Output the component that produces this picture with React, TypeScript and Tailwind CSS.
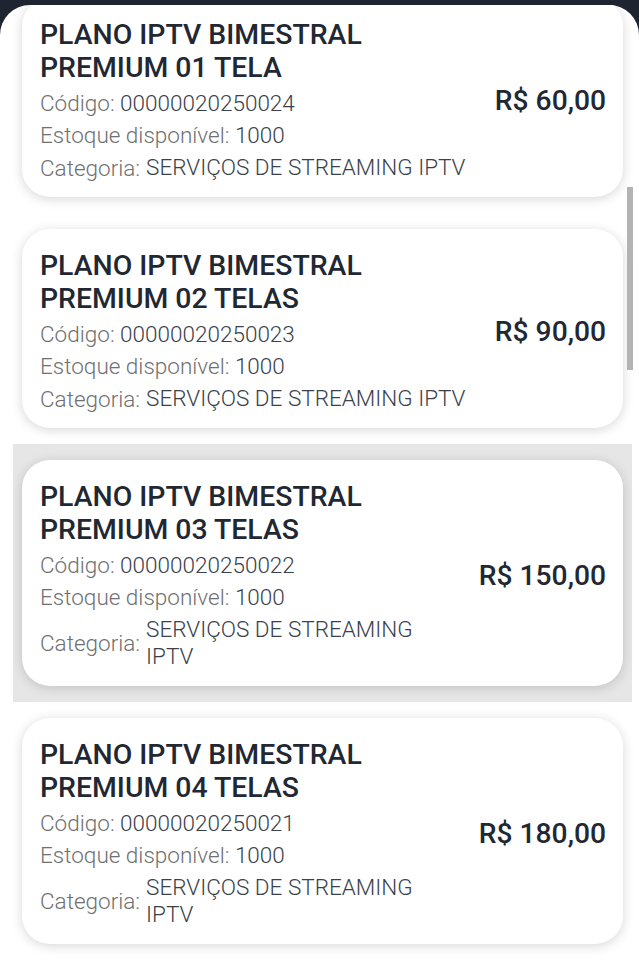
import React from "react";

type Item = {
  title1: string;
  title2: string;
  code: string;
  price: string;
  highlight?: boolean;
};

const items: Item[] = [
  { title1: "PLANO IPTV BIMESTRAL", title2: "PREMIUM 01 TELA", code: "00000020250024", price: "R$ 60,00" },
  { title1: "PLANO IPTV BIMESTRAL", title2: "PREMIUM 02 TELAS", code: "00000020250023", price: "R$ 90,00" },
  { title1: "PLANO IPTV BIMESTRAL", title2: "PREMIUM 03 TELAS", code: "00000020250022", price: "R$ 150,00", highlight: true },
  { title1: "PLANO IPTV BIMESTRAL", title2: "PREMIUM 04 TELAS", code: "00000020250021", price: "R$ 180,00" },
];

function Card({ item }: { item: Item }) {
  return (
    <div className="flex items-center rounded-[28px] bg-white pl-[18px] pr-[17px] pt-[20px] pb-[13px] shadow-[0_2px_12px_rgba(0,0,0,0.16)]">
      <div className="min-w-0 flex-1">
        <div className="text-[28.4px] leading-[33px] font-medium text-[#1f2833]">
          <div>{item.title1}</div>
          <div>{item.title2}</div>
        </div>
        <div className="mt-[3px] text-[22.5px] leading-[32px] font-light">
          <div>
            <span className="text-[#707070]">Código: </span>
            <span className="text-[#3a414b]">{item.code}</span>
          </div>
          <div>
            <span className="text-[#707070]">Estoque disponível: </span>
            <span className="text-[#3a414b]">1000</span>
          </div>
          <div className="flex items-center">
            <span className="mr-[6px] whitespace-nowrap text-[#707070]">Categoria:</span>
            <span className="py-[3px] leading-[27px] text-[#3a414b]">SERVIÇOS DE STREAMING IPTV</span>
          </div>
        </div>
      </div>
      <div className="ml-[24px] shrink-0 whitespace-nowrap text-[28.2px] font-medium text-[#1f2833]">
        {item.price}
      </div>
    </div>
  );
}

export default function App() {
  return (
    <div
      className="h-[960px] w-[639px] overflow-hidden bg-[#1e2530] pt-[5px]"
      style={{ fontFamily: "Roboto, 'Noto Sans', sans-serif" }}
    >
      <div className="relative h-[955px] overflow-hidden rounded-t-[30px] bg-white">
        <div className="-mt-[23px] pl-[13px] pr-[7px]">
          {items.map((item, i) => (
            <div key={i} className={item.highlight ? "bg-[#e6e6e6] px-[9px] py-[16px]" : "px-[9px] py-[16px]"}>
              <Card item={item} />
            </div>
          ))}
        </div>
        <div className="absolute right-[6px] top-[182px] h-[183px] w-[6px] bg-[#b3b3b3]" />
      </div>
    </div>
  );
}
